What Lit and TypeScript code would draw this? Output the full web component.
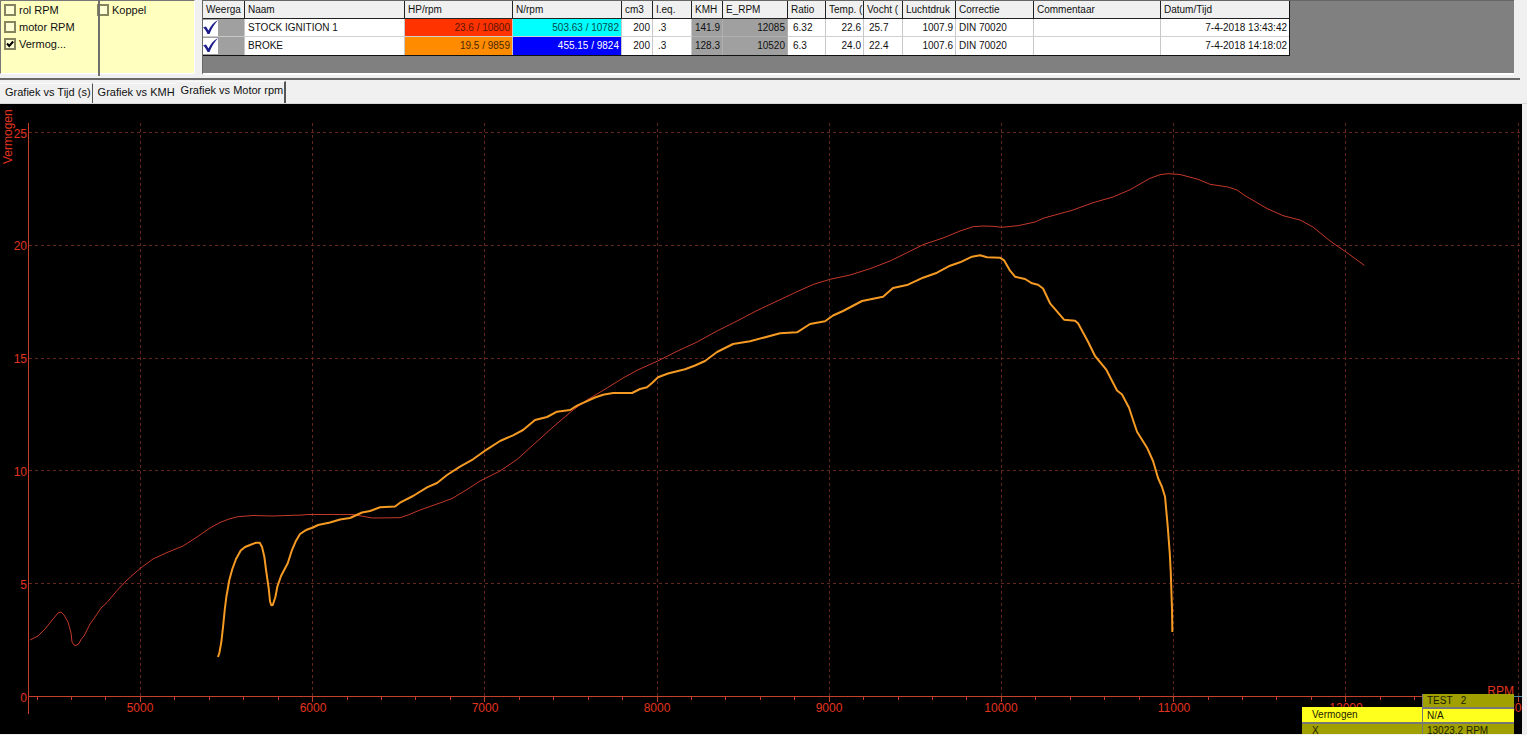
import { LitElement, html, svg, css } from "lit";
import { customElement, property, state } from "lit/decorators.js";
import { classMap } from "lit/directives/class-map.js";

type Point = [number, number];

interface Run {
  name: string;
  power: string;
  force: string;
  cc: string;
  ieq: string;
  kmh: string;
  rpm: string;
  ratio: string;
  temp: string;
  humidity: string;
  pressure: string;
  correction: string;
  comment: string;
  date: string;
}

const RUNS: Run[] = [
  {
    name: "STOCK IGNITION 1", power: "23.6 / 10800", force: "503.63 / 10782", cc: "200", ieq: ".3",
    kmh: "141.9", rpm: "12085", ratio: "6.32", temp: "22.6", humidity: "25.7", pressure: "1007.9",
    correction: "DIN 70020", comment: "", date: "7-4-2018 13:43:42",
  },
  {
    name: "BROKE", power: "19.5 / 9859", force: "455.15 / 9824", cc: "200", ieq: ".3",
    kmh: "128.3", rpm: "10520", ratio: "6.3", temp: "24.0", humidity: "22.4", pressure: "1007.6",
    correction: "DIN 70020", comment: "", date: "7-4-2018 14:18:02",
  },
];

const COLUMNS: [string, string][] = [
  ["Weerga", "w42"], ["Naam", "w160"], ["HP/rpm", "w108"], ["N/rpm", "w109"], ["cm3", "w31"],
  ["I.eq.", "w39"], ["KMH", "w31"], ["E_RPM", "w65"], ["Ratio", "w38"], ["Temp. (", "w38"],
  ["Vocht (", "w39"], ["Luchtdruk", "w53"], ["Correctie", "w78"], ["Commentaar", "w127"],
  ["Datum/Tijd", "w128"],
];

const toValue = ([x, y]: Point): Point => [5000 + ((x - 140.4) * 1000) / 172.2, (696.5 - y) / 22.56];

const parse = (trace: string): Point[] =>
  trace.trim().split(/\s+/).map((p) => toValue(p.split(",").map(Number) as Point));

const STOCK = parse(`
  30,640 38,636 45,629 53,619 58,613 61,612 64,615 68,622 71,633 72,642 74,645 76,645.5 79,643.5 81,639.5
  84,636 90,624 95,617 101,608 107,602.5 117,590.5 127,580 140,568.5 153,559 167,552.5 183,546 197,537
  210,528 220,522.5 229,519 238,516.7 253,515.5 272,516 303,515 307,514.5 353,514.5 363,516.3 372,518
  400,517.7 408,515 420,510 437,504 452,498.5 467,489.5 480,481 500,471 517,459.5 533,445 553,427 573,410
  587,400 607,388 623,378 637,370.3 657,361.3 677,351.3 697,342 717,331 737,321 758,310 780,299.7
  797,291.7 813,284.5 830,279.3 850,275 870,268.7 890,261 907,252.7 923,244.7 943,238 960,231 973,226.7
  983,226 993,226.3 1002,227.3 1018,225.7 1035,222 1043,218.3 1073,210 1093,202.7 1113,197 1130,189.7
  1150,178.3 1160,174.7 1168,173.7 1180,174.5 1198,179.3 1210,184.3 1228,187 1237,190 1245,195.7
  1267,208.5 1283,215.7 1300,220 1313,227 1330,241 1347,252.7 1364.5,265.5`);

const BROKE = parse(`
  218,657 219.3,653 221.3,642 223,627 224.7,610 226.3,597 229.3,580 232.3,569 236,559 240.7,550.5 245,547
  250,545 256,542.7 259.7,542.7 262,547 264.3,556.7 266,570 268.7,588.5 270,601.5 271.3,605.3 272.7,605
  275.3,597.3 277.3,586.7 281,576 287.7,563.3 291.7,550.7 296,540.7 300,534 306.7,529.7 313,527.5
  318,525 330,522.5 340,519.5 350,518 362,512.5 370,511 380,507.3 395,506.5 400,502.7 413,496 427,487.3
  437,483 447,475 460,466.7 473,459.3 487,449.3 500,441 513,435.3 523,430 535,420 547,417 557,411.7
  570,410 577,405.7 595,397.5 603,394.7 613,393 632,393 640,389 647,387.3 652,383 658,377.3 668,373.5
  685,369.3 695,365.5 705,361 717,352 733,344 750,341.3 780,333.3 797,332.3 810,324 825,321.3 833,315.5
  843,311 862,301 883,296.7 893,288 908,284.7 923,277.7 937,272.7 950,265.7 960,262.3 972,256.7
  980,255.3 987,257.3 1000,257.7 1004,260.3 1010,270.7 1015,276.7 1025,279 1032,283.3 1038,284.7
  1043,288.5 1050,303.3 1064,319.7 1075,320.7 1078,323.3 1088,341.7 1095,356 1106,369.3 1117,390.5
  1122,394.5 1129,407.7 1133,420 1137,431.7 1147,447.7 1153,461 1158,478 1162,487 1165,496.7
  1167.7,526.7 1169.7,553 1170.7,571.7 1172,610 1172.3,632`);

@customElement("dyno-chart")
class DynoChart extends LitElement {
  @state() private w = 1522;
  @state() private h = 630;
  private observer?: ResizeObserver;

  static styles = css`
    :host {
      display: block;
      position: relative;
      overflow: hidden;
      background: #000;
      font-family: "Liberation Sans", Arial, sans-serif;
    }
    .plot { display: block; width: 100%; height: 100%; }
    .plot text { font-size: 12px; fill: #e0341f; }
    .end { text-anchor: end; }
    .mid { text-anchor: middle; }
    .grid { stroke: #64271b; stroke-dasharray: 3 3; fill: none; shape-rendering: crispEdges; }
    .axis { stroke: #c4402b; fill: none; shape-rendering: crispEdges; }
    .cursor { stroke: #4c88a8; }
    .curve { fill: none; stroke-linejoin: round; }
    .thin { stroke: #c4382a; stroke-width: 1; }
    .thick { stroke: #f59a23; stroke-width: 2; }
    .readout {
      position: absolute;
      right: 8px;
      bottom: -3px;
      width: 212px;
      height: 43px;
      border-collapse: separate;
      border-spacing: 0;
      table-layout: fixed;
      font-size: 10px;
      line-height: 13px;
      color: #1c1c00;
    }
    .readout th, .readout td { padding: 0 4px; text-align: left; font-weight: normal; white-space: pre; }
    .readout th { width: 120px; padding-left: 10px; box-sizing: border-box; }
    .readout td { border-left: 1px solid #777; }
    .readout tr + tr td, .readout tr + tr + tr th { border-top: 2px solid #777; }
    .bright > * { background: #ffff1e; }
    .olive, .olive > * { background: #a0a000; }
  `;

  connectedCallback() {
    super.connectedCallback();
    this.observer = new ResizeObserver(() => {
      this.w = this.clientWidth;
      this.h = this.clientHeight;
    });
    this.observer.observe(this);
  }

  disconnectedCallback() {
    this.observer?.disconnect();
    super.disconnectedCallback();
  }

  private x = (rpm: number) => 28.5 + ((rpm - 4350) / 8673) * (this.w - 28.5);
  private y = (hp: number) => this.h - 37.5 - (hp / 25) * (this.h - 66);
  private snap = (v: number) => Math.floor(v) + 0.5;
  private line = (points: Point[]) => points.map(([r, p]) => `${this.x(r)},${this.y(p)}`).join(" ");

  render() {
    const { w, h } = this;
    const base = this.snap(this.y(0));
    const majors = Array.from({ length: 9 }, (_, i) => 5000 + i * 1000);
    const minors = Array.from({ length: 43 }, (_, i) => 4400 + i * 200).filter((r) => r % 1000);
    const levels = [0, 5, 10, 15, 20, 25];
    return html`
      <svg class="plot" role="img" aria-label="Vermogen vs RPM">
        ${levels.slice(1).map((p) => svg`<path class="grid" d="M29 ${this.snap(this.y(p))}H${w}" />`)}
        ${majors.map((r) => svg`<path class="grid" d="M${this.snap(this.x(r))} 19V${base}" />`)}
        <path class="axis" d="M28.5 19V${h - 20}M28 ${base}H${w}" />
        <path class="axis" d=${majors.map((r) => `M${this.snap(this.x(r))} ${base}v5`).join("")} />
        <path class="axis" d=${minors.map((r) => `M${this.snap(this.x(r))} ${base}v3`).join("")} />
        <path class="axis cursor" d="M${w - 8} ${base}H${w}" />
        ${levels.map((p) => svg`<text class="end" x="27" y=${Math.round(this.y(p) + 5)}>${p}</text>`)}
        ${majors.map((r) => svg`<text class="mid" x=${Math.round(this.x(r))} y=${h - 22}>${r}</text>`)}
        <text transform="translate(12 60) rotate(-90)">Vermogen</text>
        <text class="end" x=${w - 8} y=${base - 2}>RPM</text>
        <polyline class="curve thin" points=${this.line(STOCK)} />
        <polyline class="curve thick" points=${this.line(BROKE)} />
      </svg>
      <table class="readout">
        <tr><th></th><td class="olive">TEST   2</td></tr>
        <tr class="bright"><th>Vermogen</th><td>N/A</td></tr>
        <tr class="olive"><th>X</th><td>13023.2 RPM</td></tr>
      </table>
    `;
  }
}

@customElement("channel-option")
class ChannelOption extends LitElement {
  @property() label = "";
  @property({ type: Boolean }) checked = false;

  static styles = css`
    :host { display: block; }
    .option { display: flex; align-items: center; gap: 3px; height: 17px; white-space: nowrap; }
    .box { display: grid; }
    .box > * { grid-area: 1 / 1; }
    input {
      appearance: none;
      margin: 0;
      width: 12px;
      height: 12px;
      border: 2px solid #85855f;
      background: #ffffd4;
    }
    svg { width: 12px; height: 12px; pointer-events: none; fill: none; stroke: #000; stroke-width: 2; }
  `;

  render() {
    return html`<label class="option">
      <span class="box">
        <input type="checkbox" .checked=${this.checked} />
        ${this.checked ? html`<svg viewBox="0 0 12 12"><path d="M3 5.5L5.2 8L9.2 3.5" /></svg>` : ""}
      </span>
      <span>${this.label}</span>
    </label>`;
  }
}

@customElement("app-root")
class AppRoot extends LitElement {
  @state() private tab = 2;

  static styles = css`
    :host {
      display: flex;
      flex-direction: column;
      height: 100vh;
      min-height: 360px;
      overflow: hidden;
      background: #f0f0f0;
      color: #111;
      font: 11px/14px "Liberation Sans", Arial, sans-serif;
    }
    .top { display: flex; gap: 7px; height: 75px; margin-right: 13px; }
    .channels {
      position: relative;
      display: grid;
      grid-template-columns: 93px 97px;
      align-content: start;
      flex: none;
      height: 72px;
      padding-left: 3px;
      border: 1px solid #777;
      border-width: 1px 0 0 1px;
      border-bottom: 1px solid #fff;
      border-right: 1px solid #fff;
      background: #ffffc0;
      font-size: 11px;
    }
    .divider { position: absolute; left: 97px; top: -1px; width: 2px; height: 76px; background: #70706a; }
    .sheet {
      flex: 1;
      min-width: 0;
      overflow: hidden;
      height: 72px;
      border: 1px solid #666;
      border-right: 0;
      border-bottom: 2px solid #fff;
      background: #808080;
    }
    .runs {
      border-collapse: separate;
      border-spacing: 0;
      table-layout: fixed;
      width: 1086px;
      border-right: 1px solid #111;
      border-bottom: 1px solid #111;
      font-size: 10px;
      line-height: 16px;
    }
    .runs th, .runs td {
      box-sizing: border-box;
      height: 18px;
      padding: 0 2px 0 3px;
      overflow: hidden;
      white-space: nowrap;
      font-weight: normal;
      text-align: left;
      background: #fff;
      border-right: 1px solid #c8c8c8;
      border-bottom: 1px solid #d0d0d0;
    }
    .runs th { background: #f0f0f0; border-right-color: #222; border-bottom-color: #222; }
    .runs th:last-child, .runs td:last-child { border-right: 0; }
    .runs tr:last-child td { border-bottom: 0; }
    .runs .num { text-align: right; }
    .runs .pad { padding-left: 5px; }
    .runs .dim { background: #a0a0a0; border-color: #b0b0b0; }
    .runs .show { padding: 0; background: #a0a0a0; border-color: #c8c8c8; }
    .runs .red { background: #ff3300; color: #5a1500; }
    .runs .orange { background: #ff8c00; color: #4a2800; }
    .runs .cyan { background: #00ffff; color: #004a4a; }
    .runs .blue { background: #0000ff; color: #fff; }
    .tick { display: grid; width: 15px; height: 16px; }
    .tick > * { grid-area: 1 / 1; width: 15px; height: 16px; }
    .tick input { appearance: none; margin: 0; background: #fff; }
    .tick svg { pointer-events: none; fill: #1c1c8c; }
    .w31 { width: 31px; } .w38 { width: 38px; } .w39 { width: 39px; } .w42 { width: 42px; }
    .w53 { width: 53px; } .w65 { width: 65px; } .w78 { width: 78px; } .w108 { width: 108px; }
    .w109 { width: 109px; } .w127 { width: 127px; } .w128 { width: 128px; } .w160 { width: 160px; }
    .splitter { flex: none; height: 2px; margin: 3px 7px 1px 0; background: #6a6a6a; }
    .tabs { display: flex; align-items: flex-end; flex: none; height: 22px; border-bottom: 1px solid #d8d8d8; }
    .tab {
      height: 20px;
      padding: 0 1px 3px 5px;
      border: 0;
      border-top: 1px solid #fafafa;
      background: none;
      font: inherit;
      font-size: 11px;
      line-height: 14px;
      color: inherit;
      white-space: nowrap;
    }
    .tab.ruled { border-right: 1px solid #555; }
    .tab.active { height: 22px; padding-bottom: 5px; border-right: 2px solid #555; }
    .chart { flex: 1; min-height: 0; margin: 0 5px 1px 0; }
  `;

  private row(run: Run, i: number) {
    return html`<tr>
      <td class="show">
        <span class="tick">
          <input type="checkbox" checked aria-label=${run.name} />
          <svg viewBox="0 0 15 16"><path d="M0 7.5L3 6.5L5.5 10.5C8 5.500 10.500 2.500 15 0C11 4.500 8.500 9 6.500 14L4.500 14C3.500 11.500 2.200 9 0 7.500Z" /></svg>
        </span>
      </td>
      <td>${run.name}</td>
      <td class="num ${i ? "orange" : "red"}">${run.power}</td>
      <td class="num ${i ? "blue" : "cyan"}">${run.force}</td>
      <td class="num">${run.cc}</td>
      <td class="pad">${run.ieq}</td>
      <td class="num dim">${run.kmh}</td>
      <td class="num dim">${run.rpm}</td>
      <td class="pad">${run.ratio}</td>
      <td class="num">${run.temp}</td>
      <td class="pad">${run.humidity}</td>
      <td class="num">${run.pressure}</td>
      <td>${run.correction}</td>
      <td>${run.comment}</td>
      <td class="num">${run.date}</td>
    </tr>`;
  }

  render() {
    const tabs = ["Grafiek vs Tijd (s)", "Grafiek vs KMH", "Grafiek vs Motor rpm"];
    return html`
      <div class="top">
        <div class="channels">
          <channel-option label="rol RPM"></channel-option>
          <channel-option label="Koppel"></channel-option>
          <channel-option label="motor RPM"></channel-option>
          <span></span>
          <channel-option label="Vermog..." checked></channel-option>
          <div class="divider"></div>
        </div>
        <div class="sheet">
          <table class="runs">
            <thead><tr>${COLUMNS.map(([title, width]) => html`<th class=${width}>${title}</th>`)}</tr></thead>
            <tbody>${RUNS.map((run, i) => this.row(run, i))}</tbody>
          </table>
        </div>
      </div>
      <div class="splitter"></div>
      <div class="tabs" role="tablist">
        ${tabs.map((t, i) => html`<button
          role="tab"
          aria-selected=${i === this.tab}
          class=${classMap({ tab: true, active: i === this.tab, ruled: i === 0 })}
          @click=${() => (this.tab = i)}
        >${t}</button>`)}
      </div>
      <dyno-chart class="chart"></dyno-chart>
    `;
  }
}
